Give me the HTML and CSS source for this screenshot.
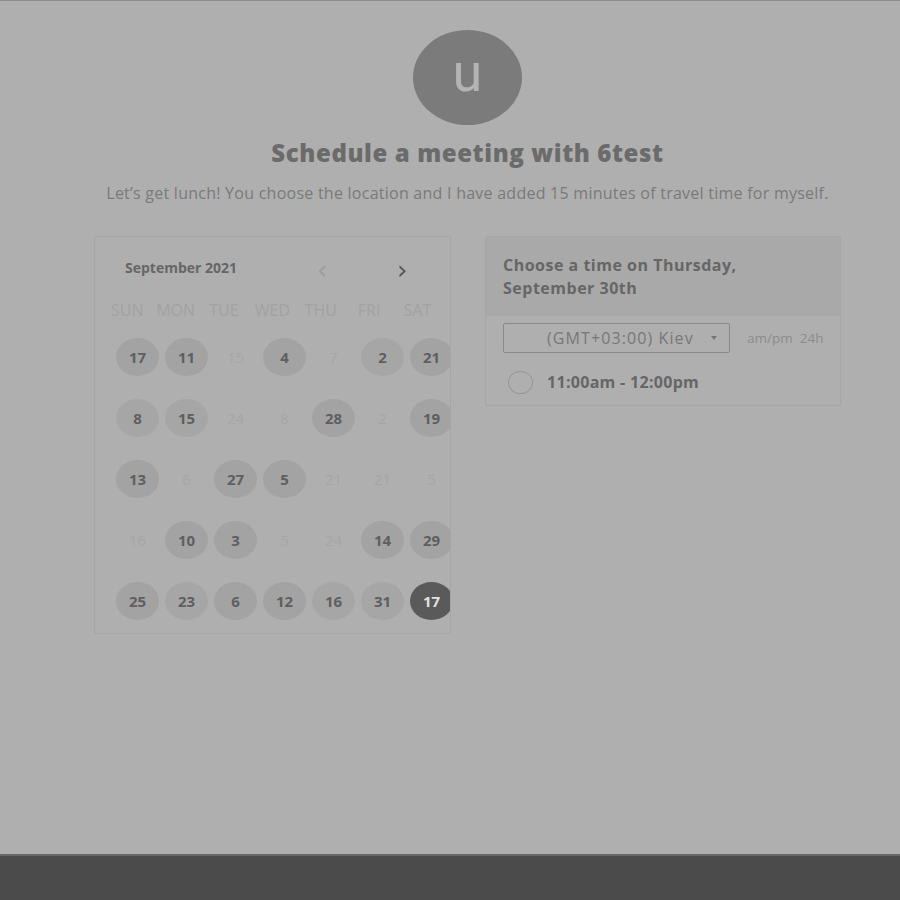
FILE: index.html
```html
<!DOCTYPE html>
<html>
<head>
<meta charset="utf-8">
<link rel="stylesheet" href="styles.css">
</head>
<body>
<div class="page">
  <main class="main">
    <div class="avatar">u</div>
    <h1 class="title">Schedule a meeting with 6test</h1>
    <p class="subtitle">Let’s get lunch! You choose the location and I have added 15 minutes of travel time for myself.</p>
    <div class="cards">
      <section class="calendar">
        <div class="cal-head">
          <span class="month">September 2021</span>
          <span class="nav prev">&lsaquo;</span>
          <span class="nav next">&rsaquo;</span>
        </div>
        <div class="dow">
          <span>SUN</span><span>MON</span><span>TUE</span><span>WED</span><span>THU</span><span>FRI</span><span>SAT</span>
        </div>
        <div class="days">
          <span class="d on">17</span><span class="d on">11</span><span class="d off">15</span><span class="d on">4</span><span class="d off">7</span><span class="d on dot">2</span><span class="d on">21</span>
          <span class="d on dot">8</span><span class="d on dot">15</span><span class="d off">24</span><span class="d off">8</span><span class="d on">28</span><span class="d off">2</span><span class="d on">19</span>
          <span class="d on">13</span><span class="d off">6</span><span class="d on">27</span><span class="d on">5</span><span class="d off">21</span><span class="d off">21</span><span class="d off">5</span>
          <span class="d off">16</span><span class="d on">10</span><span class="d on">3</span><span class="d off">5</span><span class="d off">24</span><span class="d on">14</span><span class="d on">29</span>
          <span class="d on">25</span><span class="d on dot">23</span><span class="d on">6</span><span class="d on">12</span><span class="d on dot">16</span><span class="d on dot">31</span><span class="d sel">17</span>
        </div>
      </section>
      <section class="times">
        <div class="times-head">Choose a time on Thursday,<br>September 30th</div>
        <div class="tz-row">
          <div class="select"><span>(GMT+03:00) Kiev</span><span class="caret"></span></div>
          <div class="fmt"><span>am/pm</span><span>24h</span></div>
        </div>
        <div class="slot">
          <span class="radio"></span>
          <span class="slot-text">11:00am - 12:00pm</span>
        </div>
      </section>
    </div>
  </main>
  <footer class="footer"></footer>
</div>
</body>
</html>
```

FILE: styles.css
```css
* { box-sizing: border-box; }
html, body { margin: 0; padding: 0; }
body {
  background: #afafaf;
  font-family: "Open Sans", "Liberation Sans", sans-serif;
  color: #6a6a6a;
}
.page {
  height: 900px;
  display: flex;
  flex-direction: column;
  border-top: 1px solid #8e8e8e;
}
.main {
  flex: 1;
  width: 747px;
  margin-left: 94px;
  display: flex;
  flex-direction: column;
  align-items: center;
}
.avatar {
  margin-top: 29px;
  width: 109px;
  height: 95px;
  border-radius: 50%;
  background: #7b7b7b;
  color: #b4b4b4;
  font-family: Roboto, sans-serif;
  font-weight: 400;
  font-size: 54px;
  line-height: 1;
  display: flex;
  align-items: center;
  justify-content: center;
  padding-bottom: 10px;
}
.title {
  margin: 13px 0 0;
  font-family: "Open Sans", sans-serif;
  font-weight: 800;
  font-size: 24px;
  letter-spacing: 0.6px;
  line-height: 30px;
  color: #6b6b6b;
}
.subtitle {
  margin: 15px 0 0;
  font-size: 16px;
  letter-spacing: 0.25px;
  line-height: 20px;
  color: #7a7a7a;
  white-space: nowrap;
}
.cards {
  margin-top: 33px;
  width: 100%;
  display: flex;
  gap: 34px;
  align-items: flex-start;
}
.calendar {
  width: 357px;
  height: 398px;
  border: 1px solid #a6a6a6;
  border-radius: 2px;
  overflow: hidden;
}
.cal-head {
  height: 58px;
  display: flex;
  align-items: center;
  padding-left: 30px;
  padding-top: 2px;
}
.month {
  font-weight: 700;
  font-size: 14px;
  color: #666;
  width: 192px;
}
.nav {
  font-size: 26px;
  line-height: 20px;
  font-family: "DejaVu Sans", sans-serif;
  padding-top: 6px;
}
.prev { color: #9d9d9d; width: 80px; }
.next { color: #555; }
.dow {
  display: grid;
  grid-template-columns: repeat(7, 48.4px);
  padding-left: 8px;
  margin-top: 0;
  height: 30px;
  align-items: center;
  font-size: 16px;
  color: #a2a2a2;
  text-align: center;
}
.days {
  display: grid;
  grid-template-columns: repeat(7, 49px);
  grid-auto-rows: 61px;
  padding-left: 18px;
  width: 380px;
  margin-top: 13px;
}
.d {
  width: 43px;
  height: 38px;
  border-radius: 50%;
  justify-self: center;
  display: flex;
  align-items: center;
  justify-content: center;
  font-size: 15px;
}
.on {
  background: #a3a3a3;
  color: #5f5f5f;
  font-weight: 700;
}
.dot { background: #a6a6a6; }
.off {
  color: #a6a6a6;
  font-weight: 400;
}
.sel {
  background: #5a5a5a;
  color: #e2e2e2;
  font-weight: 700;
}
.times {
  width: 356px;
  border: 1px solid #a6a6a6;
  border-radius: 2px;
}
.times-head {
  background: #a9a9a9;
  height: 79px;
  padding: 17px 0 0 17px;
  font-weight: 700;
  font-size: 16px;
  letter-spacing: 0.5px;
  line-height: 23px;
  color: #666;
}
.tz-row {
  display: flex;
  align-items: center;
  padding: 7px 0 0 17px;
}
.select {
  width: 227px;
  height: 30px;
  border: 1px solid #8a8a8a;
  border-radius: 2px;
  display: flex;
  align-items: center;
  padding-left: 43px;
  padding-right: 12px;
  font-size: 16px;
  letter-spacing: 1.1px;
  color: #777;
}
.caret {
  margin-left: auto;
  width: 0;
  height: 0;
  border-left: 3.5px solid transparent;
  border-right: 3.5px solid transparent;
  border-top: 4px solid #777;
}
.fmt {
  display: flex;
  gap: 7px;
  margin-left: 17px;
  font-size: 13.5px;
  color: #8c8c8c;
}
.slot {
  display: flex;
  align-items: center;
  height: 52px;
  padding-left: 22px;
  padding-top: 6px;
}
.radio {
  width: 25px;
  height: 23px;
  border: 1.5px solid #979797;
  border-radius: 50%;
}
.slot-text {
  margin-left: 14px;
  font-weight: 700;
  font-size: 16px;
  letter-spacing: 0.3px;
  color: #666;
}
.footer {
  height: 46px;
  background: #4b4b4b;
  border-top: 2px solid #676767;
}
```
